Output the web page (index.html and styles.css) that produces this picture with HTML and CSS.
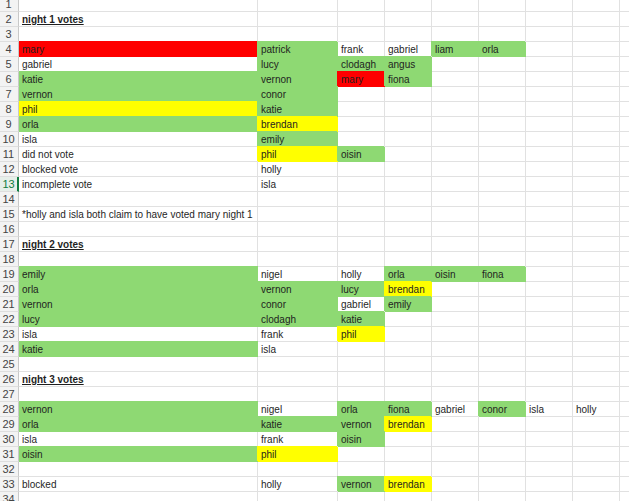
FILE: index.html
```html
<!DOCTYPE html>
<html>
<head>
<meta charset="utf-8">
<link rel="stylesheet" href="styles.css">
</head>
<body>
<div class="sheet">
<div class="row"><div class="h">1</div><div class="c"></div><div class="c"></div><div class="c"></div><div class="c"></div><div class="c"></div><div class="c"></div><div class="c"></div><div class="c"></div><div class="c"></div></div>
<div class="row"><div class="h">2</div><div class="c title">night 1 votes</div><div class="c"></div><div class="c"></div><div class="c"></div><div class="c"></div><div class="c"></div><div class="c"></div><div class="c"></div><div class="c"></div></div>
<div class="row"><div class="h">3</div><div class="c"></div><div class="c"></div><div class="c"></div><div class="c"></div><div class="c"></div><div class="c"></div><div class="c"></div><div class="c"></div><div class="c"></div></div>
<div class="row"><div class="h">4</div><div class="c r">mary</div><div class="c g">patrick</div><div class="c">frank</div><div class="c">gabriel</div><div class="c g">liam</div><div class="c g">orla</div><div class="c"></div><div class="c"></div><div class="c"></div></div>
<div class="row"><div class="h">5</div><div class="c">gabriel</div><div class="c g">lucy</div><div class="c g">clodagh</div><div class="c g">angus</div><div class="c"></div><div class="c"></div><div class="c"></div><div class="c"></div><div class="c"></div></div>
<div class="row"><div class="h">6</div><div class="c g">katie</div><div class="c g">vernon</div><div class="c r">mary</div><div class="c g">fiona</div><div class="c"></div><div class="c"></div><div class="c"></div><div class="c"></div><div class="c"></div></div>
<div class="row"><div class="h">7</div><div class="c g">vernon</div><div class="c g">conor</div><div class="c"></div><div class="c"></div><div class="c"></div><div class="c"></div><div class="c"></div><div class="c"></div><div class="c"></div></div>
<div class="row"><div class="h">8</div><div class="c y">phil</div><div class="c g">katie</div><div class="c"></div><div class="c"></div><div class="c"></div><div class="c"></div><div class="c"></div><div class="c"></div><div class="c"></div></div>
<div class="row"><div class="h">9</div><div class="c g">orla</div><div class="c y">brendan</div><div class="c"></div><div class="c"></div><div class="c"></div><div class="c"></div><div class="c"></div><div class="c"></div><div class="c"></div></div>
<div class="row"><div class="h">10</div><div class="c">isla</div><div class="c g">emily</div><div class="c"></div><div class="c"></div><div class="c"></div><div class="c"></div><div class="c"></div><div class="c"></div><div class="c"></div></div>
<div class="row"><div class="h">11</div><div class="c">did not vote</div><div class="c y">phil</div><div class="c g">oisin</div><div class="c"></div><div class="c"></div><div class="c"></div><div class="c"></div><div class="c"></div><div class="c"></div></div>
<div class="row"><div class="h">12</div><div class="c">blocked vote</div><div class="c">holly</div><div class="c"></div><div class="c"></div><div class="c"></div><div class="c"></div><div class="c"></div><div class="c"></div><div class="c"></div></div>
<div class="row"><div class="h sel">13</div><div class="c">incomplete vote</div><div class="c">isla</div><div class="c"></div><div class="c"></div><div class="c"></div><div class="c"></div><div class="c"></div><div class="c"></div><div class="c"></div></div>
<div class="row"><div class="h">14</div><div class="c"></div><div class="c"></div><div class="c"></div><div class="c"></div><div class="c"></div><div class="c"></div><div class="c"></div><div class="c"></div><div class="c"></div></div>
<div class="row"><div class="h">15</div><div class="c">*holly and isla both claim to have voted mary night 1</div><div class="c"></div><div class="c"></div><div class="c"></div><div class="c"></div><div class="c"></div><div class="c"></div><div class="c"></div><div class="c"></div></div>
<div class="row"><div class="h">16</div><div class="c"></div><div class="c"></div><div class="c"></div><div class="c"></div><div class="c"></div><div class="c"></div><div class="c"></div><div class="c"></div><div class="c"></div></div>
<div class="row"><div class="h">17</div><div class="c title">night 2 votes</div><div class="c"></div><div class="c"></div><div class="c"></div><div class="c"></div><div class="c"></div><div class="c"></div><div class="c"></div><div class="c"></div></div>
<div class="row"><div class="h">18</div><div class="c"></div><div class="c"></div><div class="c"></div><div class="c"></div><div class="c"></div><div class="c"></div><div class="c"></div><div class="c"></div><div class="c"></div></div>
<div class="row"><div class="h">19</div><div class="c g">emily</div><div class="c">nigel</div><div class="c">holly</div><div class="c g">orla</div><div class="c g">oisin</div><div class="c g">fiona</div><div class="c"></div><div class="c"></div><div class="c"></div></div>
<div class="row"><div class="h">20</div><div class="c g">orla</div><div class="c g">vernon</div><div class="c g">lucy</div><div class="c y">brendan</div><div class="c"></div><div class="c"></div><div class="c"></div><div class="c"></div><div class="c"></div></div>
<div class="row"><div class="h">21</div><div class="c g">vernon</div><div class="c g">conor</div><div class="c">gabriel</div><div class="c g">emily</div><div class="c"></div><div class="c"></div><div class="c"></div><div class="c"></div><div class="c"></div></div>
<div class="row"><div class="h">22</div><div class="c g">lucy</div><div class="c g">clodagh</div><div class="c g">katie</div><div class="c"></div><div class="c"></div><div class="c"></div><div class="c"></div><div class="c"></div><div class="c"></div></div>
<div class="row"><div class="h">23</div><div class="c">isla</div><div class="c">frank</div><div class="c y">phil</div><div class="c"></div><div class="c"></div><div class="c"></div><div class="c"></div><div class="c"></div><div class="c"></div></div>
<div class="row"><div class="h">24</div><div class="c g">katie</div><div class="c">isla</div><div class="c"></div><div class="c"></div><div class="c"></div><div class="c"></div><div class="c"></div><div class="c"></div><div class="c"></div></div>
<div class="row"><div class="h">25</div><div class="c"></div><div class="c"></div><div class="c"></div><div class="c"></div><div class="c"></div><div class="c"></div><div class="c"></div><div class="c"></div><div class="c"></div></div>
<div class="row"><div class="h">26</div><div class="c title">night 3 votes</div><div class="c"></div><div class="c"></div><div class="c"></div><div class="c"></div><div class="c"></div><div class="c"></div><div class="c"></div><div class="c"></div></div>
<div class="row"><div class="h">27</div><div class="c"></div><div class="c"></div><div class="c"></div><div class="c"></div><div class="c"></div><div class="c"></div><div class="c"></div><div class="c"></div><div class="c"></div></div>
<div class="row"><div class="h">28</div><div class="c g">vernon</div><div class="c">nigel</div><div class="c g">orla</div><div class="c g">fiona</div><div class="c">gabriel</div><div class="c g">conor</div><div class="c">isla</div><div class="c">holly</div><div class="c"></div></div>
<div class="row"><div class="h">29</div><div class="c g">orla</div><div class="c g">katie</div><div class="c g">vernon</div><div class="c y">brendan</div><div class="c"></div><div class="c"></div><div class="c"></div><div class="c"></div><div class="c"></div></div>
<div class="row"><div class="h">30</div><div class="c">isla</div><div class="c">frank</div><div class="c g">oisin</div><div class="c"></div><div class="c"></div><div class="c"></div><div class="c"></div><div class="c"></div><div class="c"></div></div>
<div class="row"><div class="h">31</div><div class="c g">oisin</div><div class="c y">phil</div><div class="c"></div><div class="c"></div><div class="c"></div><div class="c"></div><div class="c"></div><div class="c"></div><div class="c"></div></div>
<div class="row"><div class="h">32</div><div class="c"></div><div class="c"></div><div class="c"></div><div class="c"></div><div class="c"></div><div class="c"></div><div class="c"></div><div class="c"></div><div class="c"></div></div>
<div class="row"><div class="h">33</div><div class="c">blocked</div><div class="c">holly</div><div class="c g">vernon</div><div class="c y">brendan</div><div class="c"></div><div class="c"></div><div class="c"></div><div class="c"></div><div class="c"></div></div>
<div class="row"><div class="h">34</div><div class="c"></div><div class="c"></div><div class="c"></div><div class="c"></div><div class="c"></div><div class="c"></div><div class="c"></div><div class="c"></div><div class="c"></div></div>
</div>
</body>
</html>
```

FILE: styles.css
```css
html, body {
  margin: 0;
  padding: 0;
  background: #ffffff;
  overflow: hidden;
}
.sheet {
  margin-top: -3px;
  font-family: "Liberation Sans", Arial, sans-serif;
  font-size: 10px;
  color: #1f1f1f;
}
.row {
  display: grid;
  grid-template-columns: 19px 239px 80px 47px 47px 47px 47px 47px 47px 40px;
  height: 15px;
}
.h {
  box-sizing: border-box;
  height: 15px;
  background: #f3f3f3;
  border-right: 1px solid #c8c8c8;
  border-bottom: 1px solid #dedede;
  color: #444444;
  font-size: 11px;
  line-height: 14px;
  text-align: center;
  padding-right: 1px;
}
.h.sel {
  color: #107c41;
  background: #e6efe9;
  border-right: 2px solid #107c41;
  padding-right: 0;
}
.c {
  box-sizing: border-box;
  height: 15px;
  border-right: 1px solid #e1e1e1;
  border-bottom: 1px solid #e1e1e1;
  padding: 1px 0 0 3px;
  line-height: 13px;
  white-space: nowrap;
}
.title {
  font-weight: bold;
  text-decoration: underline;
  text-underline-offset: 1px;
}
.g {
  background: #8ed973;
  border-color: #8ed973;
  box-shadow: -1px -1px 0 0 #8ed973;
}
.r {
  background: #ff0000;
  border-color: #ff0000;
  box-shadow: -1px -1px 0 0 #ff0000;
}
.y {
  background: #ffff00;
  border-color: #ffff00;
  box-shadow: -1px -1px 0 0 #ffff00;
}
.row > .c:nth-child(2).g { box-shadow: 0 -1px 0 0 #8ed973; }
.row > .c:nth-child(2).r { box-shadow: 0 -1px 0 0 #ff0000; }
.row > .c:nth-child(2).y { box-shadow: 0 -1px 0 0 #ffff00; }
```
